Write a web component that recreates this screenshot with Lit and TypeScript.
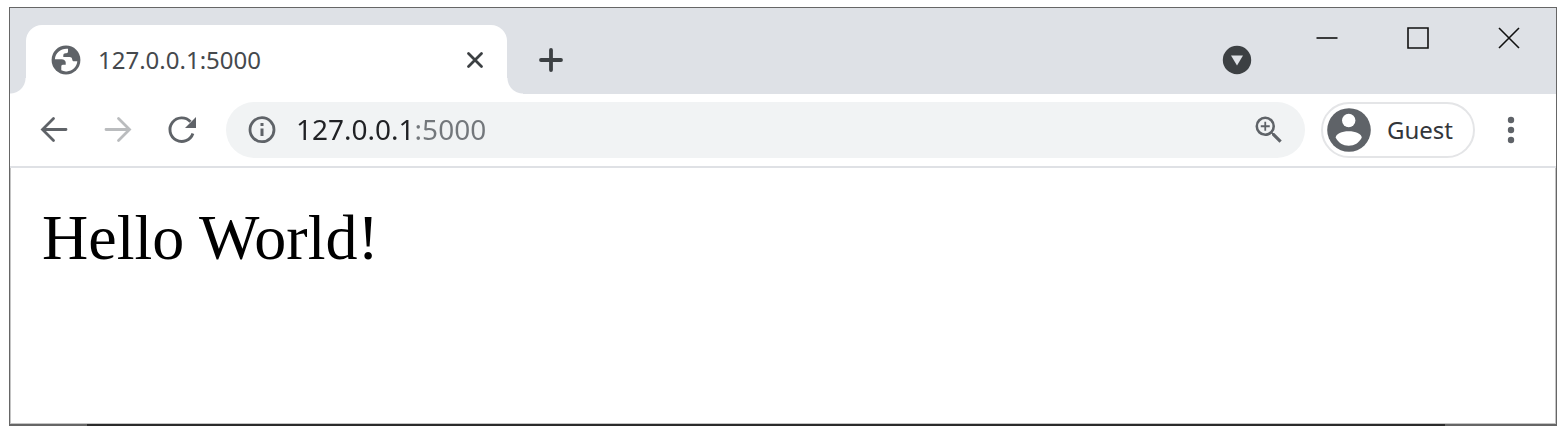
import { LitElement, html, css } from 'lit';
import { customElement, property } from 'lit/decorators.js';

@customElement('browser-tab-strip')
export class BrowserTabStrip extends LitElement {
  @property() title = '';

  static styles = css`
    :host {
      display: flex;
      align-items: flex-end;
      height: 86px;
      padding: 0 2px 0 16px;
      box-sizing: border-box;
      background: #dee1e6;
      font-family: "Noto Sans", "Open Sans", sans-serif;
    }
    button {
      display: grid;
      place-items: center;
      padding: 0;
      border: 0;
      background: none;
      color: #3c4043;
    }
    svg { display: block; }
    .tab {
      position: relative;
      display: flex;
      align-items: center;
      flex: 0 1 481px;
      box-sizing: border-box;
      height: 69px;
      padding: 0 16px 0 24px;
      border-radius: 16px 16px 0 0;
      background: #fff;
    }
    .tab::before,
    .tab::after {
      content: "";
      position: absolute;
      bottom: 0;
      width: 16px;
      height: 16px;
    }
    .tab::before {
      right: 100%;
      background: radial-gradient(circle at 0 0, transparent 15px, #fff 16px);
    }
    .tab::after {
      left: 100%;
      background: radial-gradient(circle at 100% 0, transparent 15px, #fff 16px);
    }
    .globe { color: #5f6368; }
    .title {
      flex: 1;
      margin-left: 16px;
      font-size: 24px;
      line-height: 32px;
      color: #45494d;
    }
    .close { width: 32px; height: 32px; }
    .new { width: 56px; height: 69px; margin-left: 16px; }
    .spacer { flex: 1; }
    .search { width: 56px; height: 69px; margin-right: 16px; }
    .caption {
      align-self: flex-start;
      width: 91px;
      height: 60px;
      color: #111;
    }
  `;

  render() {
    return html`
      <div class="tab" role="tab" aria-selected="true">
        <svg class="globe" width="32" height="32" viewBox="0 0 32 32" aria-hidden="true">
          <circle cx="16" cy="16" r="14.4" fill="currentColor" />
          <path fill="#fff" d="M17.500 4.800C11 4.300 5.300 8.800 4.900 15.300H11.500C14 15.300 15.700 16.600 15.700 18.600V20.800H12.800C11.800 20.800 11.300 21.500 11.300 22.500V26.300C13 27.200 14.800 27.600 16.800 27.400C22.500 27 27 22.800 27.300 17.300H24.200C22.800 17.300 22.200 16.400 22.200 15.200C22 13.900 21 13.100 19.600 13.100H13.300V11.300C13.300 10 14.200 9.300 15.500 9.300H16.300C17.400 9.300 18 8.600 18 7.600V4.800Z" />
        </svg>
        <span class="title">${this.title}</span>
        <button class="close" aria-label="Close tab">
          <svg width="18" height="18" viewBox="0 0 18 18" fill="none" stroke="currentColor" stroke-width="2.800" stroke-linecap="round"><path d="M2.500 2.500l13 13M15.500 2.500l-13 13" /></svg>
        </button>
      </div>
      <button class="new" aria-label="New tab">
        <svg width="24" height="24" viewBox="0 0 24 24" fill="none" stroke="currentColor" stroke-width="3.800" stroke-linecap="round"><path d="M12 2v20M2 12h20" /></svg>
      </button>
      <span class="spacer"></span>
      <button class="search" aria-label="Search tabs">
        <svg width="30" height="30" viewBox="0 0 30 30"><circle cx="15" cy="15" r="14.200" fill="currentColor" /><path d="M9 10.500h12l-6 10z" fill="#dee1e6" /></svg>
      </button>
      <button class="caption" aria-label="Minimize">
        <svg width="22" height="22" viewBox="0 0 22 22" fill="none" stroke="currentColor" stroke-width="1.600"><path d="M0.500 11h21" /></svg>
      </button>
      <button class="caption" aria-label="Maximize">
        <svg width="22" height="22" viewBox="0 0 22 22" fill="none" stroke="currentColor" stroke-width="1.600"><path d="M1 1h20v20h-20z" /></svg>
      </button>
      <button class="caption" aria-label="Close">
        <svg width="22" height="22" viewBox="0 0 22 22" fill="none" stroke="currentColor" stroke-width="1.600"><path d="M1 1l20 20M21 1l-20 20" /></svg>
      </button>
    `;
  }
}

@customElement('browser-toolbar')
export class BrowserToolbar extends LitElement {
  @property() address = '';
  @property() profile = '';

  static styles = css`
    :host {
      display: flex;
      align-items: center;
      box-sizing: border-box;
      height: 74px;
      padding: 0 25px 0 12px;
      border-bottom: 2px solid #dfe1e5;
      background: #fff;
      color: #5f6368;
      font-family: "Noto Sans", "Open Sans", sans-serif;
    }
    button {
      display: grid;
      place-items: center;
      flex: none;
      padding: 0;
      border: 0;
      background: none;
      color: inherit;
    }
    svg { display: block; }
    .nav { width: 64px; height: 56px; }
    .nav:disabled { color: #babcbe; }
    .omnibox {
      display: flex;
      align-items: center;
      flex: 1;
      min-width: 0;
      height: 56px;
      margin-left: 12px;
      padding: 0 16px 0 18px;
      box-sizing: border-box;
      border-radius: 28px;
      background: #f1f3f4;
    }
    .icon { width: 40px; height: 40px; }
    .icon.info { width: 36px; }
    .url {
      flex: 1;
      min-width: 0;
      height: 40px;
      margin: 0 0 2px 16px;
      padding: 0;
      border: 0;
      outline: 0;
      font: 28px/40px "Noto Sans", "Open Sans", sans-serif;
      color: #202124;
      background: linear-gradient(90deg, #202124 119px, #73777b 119px);
      -webkit-background-clip: text;
      background-clip: text;
      -webkit-text-fill-color: transparent;
    }
    .profile {
      display: flex;
      align-items: center;
      gap: 16px;
      height: 56px;
      margin-left: 16px;
      padding: 0 20px 0 4px;
      border: 2px solid #e4e5e7;
      border-radius: 28px;
      font: 24px/32px "Noto Sans", "Open Sans", sans-serif;
    }
    .name { color: #33363a; }
    .menu { width: 40px; height: 56px; margin-left: 16px; }
  `;

  render() {
    return html`
      <button class="nav" aria-label="Back">
        <svg width="30" height="30" viewBox="0 0 30 30" fill="none" stroke="currentColor" stroke-width="2.800" stroke-linecap="round"><path d="M27 14.500H4M14.500 3.500L3.500 14.500L14.500 25.500" /></svg>
      </button>
      <button class="nav" aria-label="Forward" disabled>
        <svg width="30" height="30" viewBox="0 0 30 30" fill="none" stroke="currentColor" stroke-width="2.800" stroke-linecap="round"><path d="M3 14.500H26M15.500 3.500L26.500 14.500L15.500 25.500" /></svg>
      </button>
      <button class="nav" aria-label="Reload">
        <svg width="30" height="30" viewBox="0 0 30 30" fill="none" stroke="currentColor" stroke-width="2.900"><path d="M25.900 18.500A11.800 11.800 0 1 1 23.500 6.800" /><path d="M29 2V13H18Z" fill="currentColor" stroke="none" /></svg>
      </button>
      <div class="omnibox">
        <button class="icon info" aria-label="View site information">
          <svg width="32" height="32" viewBox="0 0 32 32" fill="none" stroke="currentColor"><circle cx="16" cy="15.700" r="12" stroke-width="2.800" /><path d="M16 14.500V22M16 9V12" stroke-width="3" /></svg>
        </button>
        <input class="url" type="text" aria-label="Address" spellcheck="false" .value=${this.address} />
        <button class="icon" aria-label="Zoom">
          <svg width="36" height="36" viewBox="0 0 24 24" fill="currentColor"><path d="M15.500 14h-.79l-.28-.27A6.470 6.470 0 0 0 16 9.500 6.500 6.500 0 1 0 9.500 16c1.610 0 3.090-.59 4.230-1.570l.27.28v.79l5 4.990L20.490 19l-4.990-5zm-6 0.300a4.800 4.800 0 1 1 0-9.600 4.800 4.800 0 0 1 0 9.600zM12.500 10.100h-2.400v2.400H8.900v-2.400H6.500V8.900h2.400V6.500h1.200v2.400h2.400v1.200z" /></svg>
        </button>
      </div>
      <button class="profile">
        <svg width="44" height="44" viewBox="0 0 44 44" aria-hidden="true"><circle cx="22" cy="22" r="21.800" fill="currentColor" /><circle cx="21.700" cy="12.500" r="6.700" fill="#fff" /><path d="M8.700 29.800C8.700 25.800 15 23.300 21.700 23.300S34.700 25.800 34.700 29.800C32 34.800 27.500 37.800 21.700 37.800S11.400 34.800 8.700 29.800z" fill="#fff" /></svg>
        <span class="name">${this.profile}</span>
      </button>
      <button class="menu" aria-label="Menu">
        <svg width="8" height="28" viewBox="0 0 8 28" fill="currentColor"><circle cx="4" cy="4" r="3.200" /><circle cx="4" cy="14" r="3.200" /><circle cx="4" cy="24" r="3.200" /></svg>
      </button>
    `;
  }
}

@customElement('app-root')
export class AppRoot extends LitElement {
  static styles = css`
    :host {
      display: flex;
      box-sizing: border-box;
      min-height: 100vh;
      padding: 7px 11px 10px 9px;
      background: #fff;
    }
    .window {
      display: flex;
      flex-direction: column;
      flex: 1;
      min-width: 0;
      padding: 1px 1px 2px;
      background: linear-gradient(90deg, #666 78px, #2b2b2b 78px, #2b2b2b calc(100% - 112px), #666 calc(100% - 112px)) bottom / 100% 2px no-repeat #666;
    }
    .page {
      flex: 1;
      padding: 30px 32px;
      background: #fff;
      box-shadow: inset 1px -1px 0 #c4c4c4, inset -1px 0 0 #c4c4c4;
      font: 64px/80px "Liberation Serif", "Times New Roman", serif;
      color: #000;
    }
  `;

  render() {
    return html`
      <div class="window">
        <browser-tab-strip .title=${'127.0.0.1:5000'}></browser-tab-strip>
        <browser-toolbar .address=${'127.0.0.1:5000'} .profile=${'Guest'}></browser-toolbar>
        <main class="page">Hello World!</main>
      </div>
    `;
  }
}
